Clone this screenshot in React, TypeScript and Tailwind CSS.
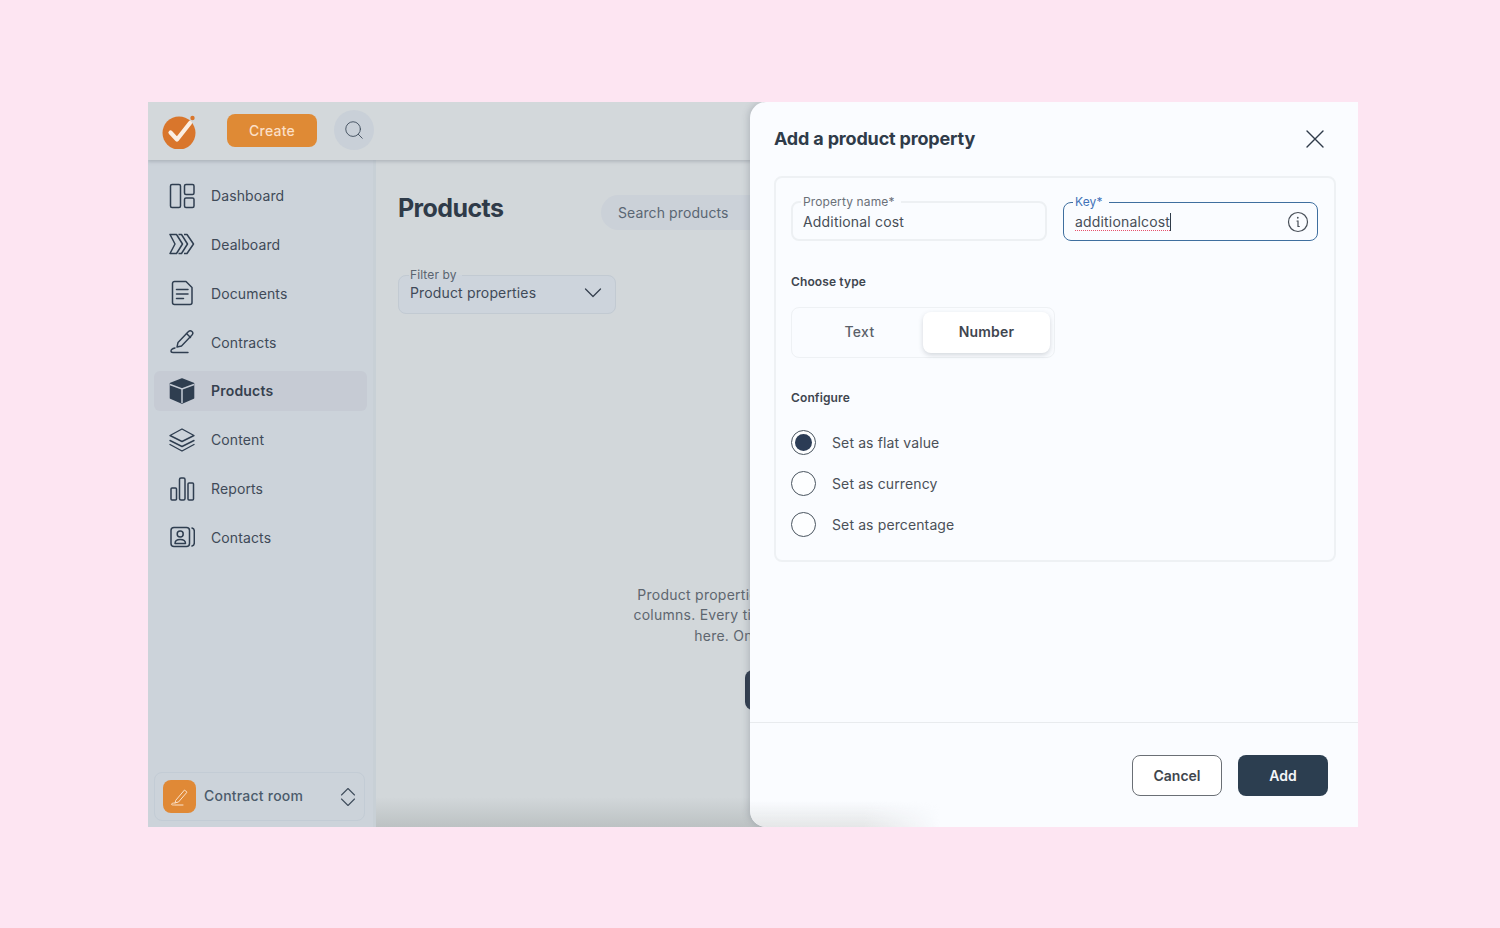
import React from "react";
import { Search } from "lucide-react";

const ic = "#2f3e50";

function Logo() {
  return (
    <svg width="36" height="36" viewBox="0 0 36 36" fill="none">
      <circle cx="17" cy="20" r="16.5" fill="#d9762c" />
      <path d="M8.5 19.5L15 26.5L28 10" stroke="#fbeee2" strokeWidth="4.2" strokeLinecap="round" strokeLinejoin="round" />
      <circle cx="30.5" cy="5" r="2.2" fill="#d9762c" />
    </svg>
  );
}

const navIcons: Record<string, React.ReactNode> = {
  Dashboard: (
    <svg width="26" height="26" viewBox="0 0 26 26" fill="none" stroke={ic} strokeWidth="1.5">
      <rect x="1.5" y="1.5" width="10" height="23" rx="1.5" />
      <rect x="15.5" y="1.5" width="9.5" height="10" rx="1.5" />
      <rect x="15.5" y="15" width="9.5" height="9.5" rx="1.5" />
    </svg>
  ),
  Dealboard: (
    <svg width="26" height="22" viewBox="0 0 26 22" fill="none" stroke={ic} strokeWidth="1.5" strokeLinejoin="round">
      <path d="M1 1.5H7.5L13.5 11L7.5 20.5H1L6 11Z" />
      <path d="M9.5 1.5H12.5L18.5 11L12.5 20.5H9.5" />
      <path d="M15 1.5H18L24.5 11L18 20.5H15" />
    </svg>
  ),
  Documents: (
    <svg width="26" height="26" viewBox="0 0 26 26" fill="none" stroke={ic} strokeWidth="1.5" strokeLinejoin="round" strokeLinecap="round">
      <path d="M3.5 3.5A2 2 0 0 1 5.5 1.5H17L23 7.5V22.5A2 2 0 0 1 21 24.5H5.5A2 2 0 0 1 3.5 22.5Z" />
      <path d="M7.5 9.5H19M7.5 14H19M7.5 18.5H14.5" />
    </svg>
  ),
  Contracts: (
    <svg width="26" height="26" viewBox="0 0 26 26" fill="none" stroke={ic} strokeWidth="1.4" strokeLinejoin="round" strokeLinecap="round">
      <path d="M8 18L9 13.5L19.5 2.5C20.5 1.5 22 1.5 23 2.5C24 3.5 24 5 23 6L12.5 17Z" />
      <path d="M17.5 4.5L21.5 8.5" />
      <path d="M6 19C3.5 19.5 2 20.5 2 22C2 23 2.5 23.5 4 23.5H19" />
    </svg>
  ),
  Products: (
    <svg width="26" height="26" viewBox="0 0 26 26">
      <path d="M13 1L24.5 5.5V20L13 25L1.5 20V5.5Z" fill={ic} strokeLinejoin="round" stroke={ic} strokeWidth="1.6" />
      <path d="M1 6.5L13 11L25 6.5M13 11V25" fill="none" stroke="#c5cbd5" strokeWidth="1.5" />
    </svg>
  ),
  Content: (
    <svg width="26" height="24" viewBox="0 0 26 24" fill="none" stroke={ic} strokeWidth="1.4" strokeLinejoin="round" strokeLinecap="round">
      <path d="M13 1L25 7.5L13 13.5L1 7.5Z" />
      <path d="M1 12.5L13 18.5L25 12.5" />
      <path d="M1 16.5L13 23L25 16.5" />
    </svg>
  ),
  Reports: (
    <svg width="26" height="24" viewBox="0 0 26 24" fill="none" stroke={ic} strokeWidth="1.5">
      <rect x="2" y="11" width="5.5" height="12" rx="1" />
      <rect x="10.5" y="1" width="5.5" height="22" rx="1.5" />
      <rect x="19" y="6" width="5.5" height="17" rx="1" />
    </svg>
  ),
  Contacts: (
    <svg width="26" height="22" viewBox="0 0 26 22" fill="none" stroke={ic} strokeWidth="1.5" strokeLinecap="round" strokeLinejoin="round">
      <rect x="2" y="1.5" width="18.5" height="19" rx="3" />
      <circle cx="11.2" cy="8" r="3" />
      <path d="M6 17.5C6 14.5 8 13.5 11.2 13.5C14.5 13.5 16.5 14.5 16.5 17.5Z" />
      <path d="M23 2C24.8 2.5 25.3 3.5 25.3 5V17C25.3 18.5 24.8 19.5 23 20" />
    </svg>
  ),
};

const nav = ["Dashboard", "Dealboard", "Documents", "Contracts", "Products", "Content", "Reports", "Contacts"];

function Radio({ label, on }: { label: string; on?: boolean }) {
  return (
    <div className="flex h-[25px] items-center gap-[16px]">
      <span className="flex h-[25px] w-[25px] items-center justify-center rounded-full border border-[#4a5560] bg-[#fdfeff]">
        {on && <span className="h-[17px] w-[17px] rounded-full bg-[#2b3c55]" />}
      </span>
      <span className="text-[14px] tracking-[0.12px] text-[#4a5058]">{label}</span>
    </div>
  );
}

export default function App() {
  return (
    <div
      className="h-[928px] w-full overflow-hidden bg-[#fde5f2] pl-[148px] pt-[102px]"
      style={{ fontFamily: "Inter, 'Liberation Sans', sans-serif" }}
    >
      <div className="relative flex h-[725px] w-[1210px] flex-col overflow-hidden bg-[#d2d7da]">
        {/* top bar */}
        <div className="z-10 flex h-[58px] shrink-0 items-center bg-[#d3d8db] pl-[14px] shadow-[0_2px_3px_rgba(120,130,140,0.35)]">
          <Logo />
          <button className="mb-[2px] ml-[29px] h-[33px] w-[90px] rounded-lg bg-[#df8a35] text-[14px] font-medium tracking-[0.2px] text-[#fbdfc6]">
            Create
          </button>
          <span className="mb-[2px] ml-[17px] flex h-[40px] w-[40px] items-center justify-center rounded-full bg-[#c9d0d8]">
            <Search size={22} strokeWidth={1} color="#3f4d5c" />
          </span>
        </div>

        <div className="flex min-h-0 flex-1">
          {/* sidebar */}
          <aside className="flex w-[228px] shrink-0 flex-col justify-between border-r-[3px] border-[#c8d0d6] bg-[#ccd3da] px-[6px] pb-[6px] pt-[15.5px]">
            <nav className="flex flex-col gap-[8.85px]">
              {nav.map((n) => (
                <div
                  key={n}
                  className={
                    n === "Products"
                      ? "flex h-[40px] items-center gap-[16px] rounded-md bg-[#c6cbd4] pl-[15px] text-[14px] font-semibold tracking-[0.2px] text-[#36414f]"
                      : "flex h-[40px] items-center gap-[16px] pl-[15px] text-[14px] tracking-[0.12px] text-[#3f4a58]"
                  }
                >
                  <span className="flex w-[26px] justify-center">{navIcons[n]}</span>
                  {n}
                </div>
              ))}
            </nav>
            <div className="flex h-[49px] w-[211px] items-center rounded-lg border border-[#c3ccd5] pl-[8px] pr-[8px]">
              <span className="flex h-[33px] w-[33px] items-center justify-center rounded-lg bg-[#e08936]">
                <svg width="20" height="20" viewBox="0 0 20 20" fill="none" stroke="#fbe3cd" strokeWidth="1" strokeLinejoin="round" strokeLinecap="round">
                  <path d="M6 13L14.5 3L17 5.2L8.5 15L5.5 15.8Z" />
                  <path d="M5 16C2.5 16 1.5 16.5 1.5 17.3C1.5 18 3 18 4.5 18H13" />
                </svg>
              </span>
              <span className="ml-[8px] flex-1 pb-[2px] text-[14px] font-medium tracking-[0.22px] text-[#4b5b6b]">Contract room</span>
              <svg width="16" height="20" viewBox="0 0 16 20" fill="none" stroke="#3f4d5c" strokeWidth="1.1" strokeLinecap="round" strokeLinejoin="round">
                <path d="M1.5 8L8 1.5L14.5 8" />
                <path d="M1.5 12L8 18.5L14.5 12" />
              </svg>
            </div>
          </aside>

          {/* main */}
          <main className="relative min-w-0 flex-1 pl-[22px] pt-[26px]">
            <div className="flex items-start">
              <h1 className="w-[203px] text-[25px] font-bold leading-[44px] tracking-[-0.6px] text-[#2f3b49]">Products</h1>
              <div className="mt-[9px] flex h-[35px] w-[260px] shrink-0 items-center rounded-full bg-[#cbd1d8] pl-[17px] text-[14px] tracking-[0.1px] text-[#5a6673]">
                Search products
              </div>
            </div>
            <fieldset className="mt-[38px] h-[46px] w-[218px] rounded-lg border border-[#c2cad2] bg-[#cdd4dc] pl-[10px] pr-[13px]">
              <legend className="px-[1px] pr-[5px] text-[12px] leading-[14px] tracking-[0.1px] text-[#5a6470]">Filter by</legend>
              <div className="flex items-center justify-between pl-[1px] pt-[2px] text-[14px] leading-[18px] tracking-[0.15px] text-[#3f4a58]">
                Product properties
                <svg width="18" height="18" viewBox="0 0 18 18" fill="none" stroke="#36414f" strokeWidth="1.3" strokeLinecap="round" strokeLinejoin="round">
                  <path d="M1.5 5L9 12.5L16.5 5" />
                </svg>
              </div>
            </fieldset>
            <div className="mt-[270.5px] flex w-[936px] flex-col items-center text-[14px] leading-[20.5px] tracking-[0.25px] text-[#5e666f]">
              <p className="whitespace-nowrap">Product properties are extra columns added to your product tables</p>
              <p className="whitespace-nowrap">columns. Every time you add a new product property it will be listed</p>
              <p className="whitespace-nowrap">here. Once added, it can be used in all your items.</p>
              <button className="mt-[24px] h-[40px] w-[242px] rounded-lg bg-[#2f3b4d]" />
            </div>
            <div className="absolute inset-x-0 bottom-0 h-[30px] bg-gradient-to-b from-transparent to-[#bcc2c3]" />
          </main>
        </div>

        {/* slide-over panel */}
        <section className="absolute bottom-0 right-0 top-0 z-20 flex w-[608px] flex-col rounded-l-2xl bg-[#fafcff] shadow-[-2px_0_6px_rgba(90,100,110,0.25)]">
          <header className="flex h-[74px] shrink-0 items-center justify-between pb-[1px] pl-[24px] pr-[31px]">
            <h2 className="text-[18px] font-bold tracking-[-0.17px] text-[#2f3b49]">Add a product property</h2>
            <svg width="24" height="24" viewBox="0 0 24 24" fill="none" stroke="#2f3b49" strokeWidth="1.4" strokeLinecap="round">
              <path d="M4 4L20 20M20 4L4 20" />
            </svg>
          </header>
          <div className="ml-[24px] h-[386px] w-[562px] rounded-lg border-2 border-[#eef1f4] px-[15px] pt-[17px]">
            <div className="flex gap-[16px]">
              <fieldset className="h-[46px] w-[256px] rounded-lg border-2 border-[#edf0f3] pl-[8px]">
                <legend className="px-[2px] pr-[6px] text-[12px] leading-[14px] tracking-[0.12px] text-[#6a7078]">Property name*</legend>
                <div className="pl-[2px] pt-[4px] text-[14px] leading-[18px] tracking-[0.18px] text-[#474e57]">Additional cost</div>
              </fieldset>
              <fieldset className="h-[46px] w-[255px] rounded-lg border border-[#3f6f9f] pl-[9px] pr-[8px]">
                <legend className="px-[2px] pr-[6px] text-[12px] leading-[14px] tracking-[0.1px] text-[#3f72b8]">Key*</legend>
                <div className="flex items-center justify-between pl-[2px] pt-[2px] text-[14px] leading-[18px] tracking-[0.17px] text-[#474e57]">
                  <span className="border-r border-[#2f3b49] underline decoration-[#e8506a] decoration-dotted decoration-1 underline-offset-[3px]">additionalcost</span>
                  <svg width="22" height="22" viewBox="0 0 22 22" fill="none" stroke="#474e57" strokeWidth="1.2" strokeLinecap="round">
                    <circle cx="11" cy="11" r="9.5" />
                    <path d="M10 10H11V15.5H12.3" />
                    <path d="M10.8 6.6V6.8" strokeWidth="1.7" />
                  </svg>
                </div>
              </fieldset>
            </div>
            <h3 className="mt-[33px] text-[12px] font-semibold leading-[16px] tracking-[0.12px] text-[#3f464f]">Choose type</h3>
            <div className="mt-[17px] flex h-[51px] w-[264px] items-center rounded-lg border border-[#eef1f4] pr-[4px]">
              <span className="w-[135px] pb-[2px] text-center text-[14px] font-medium tracking-[0.3px] text-[#5a616a]">Text</span>
              <span className="-ml-[4px] flex h-[41px] w-[127px] items-center justify-center rounded-lg bg-white pb-[2px] text-[14px] font-semibold tracking-[0.2px] text-[#3f464f] shadow-[0_2px_5px_rgba(60,70,80,0.2)]">
                Number
              </span>
            </div>
            <h3 className="mt-[32px] text-[12px] font-semibold leading-[16px] tracking-[0.12px] text-[#3f464f]">Configure</h3>
            <div className="mt-[24px] flex flex-col gap-[16px]">
              <Radio label="Set as flat value" on />
              <Radio label="Set as currency" />
              <Radio label="Set as percentage" />
            </div>
          </div>
          <div className="flex-1" />
          <footer className="flex h-[105px] shrink-0 items-start justify-end gap-[16px] border-t border-[#e8ebee] pr-[30px] pt-[32px]">
            <button className="h-[41px] w-[90px] rounded-lg border border-[#6a6f75] bg-white text-[14px] font-semibold text-[#40464d]">Cancel</button>
            <button className="h-[41px] w-[90px] rounded-lg bg-[#2c3e50] text-[14px] font-semibold text-[#f4f6f8]">Add</button>
          </footer>
          <div className="absolute bottom-0 left-0 h-[26px] w-[190px] rounded-bl-2xl bg-gradient-to-b from-transparent to-[#e4e6e7] [mask-image:linear-gradient(to_right,black_60%,transparent)]" />
        </section>
      </div>
    </div>
  );
}
